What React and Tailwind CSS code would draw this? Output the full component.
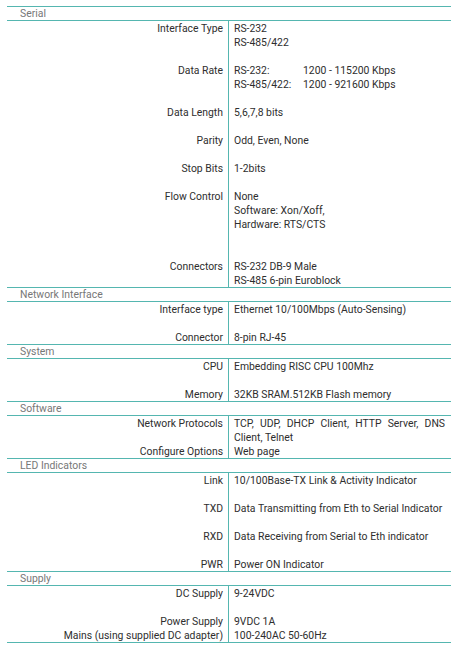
import React from "react";

const sections = [
  {
    title: "Serial",
    rows: [
      { label: "Interface Type", lines: ["RS-232", "RS-485/422"], after: 1 },
      { label: "Data Rate", rate: true, after: 1 },
      { label: "Data Length", lines: ["5,6,7,8 bits"], after: 1 },
      { label: "Parity", lines: ["Odd, Even, None"], after: 1 },
      { label: "Stop Bits", lines: ["1-2bits"], after: 1 },
      { label: "Flow Control", lines: ["None", "Software: Xon/Xoff,", "Hardware: RTS/CTS"], after: 2 },
      { label: "Connectors", lines: ["RS-232 DB-9 Male", "RS-485 6-pin Euroblock"], after: 0 },
    ],
  },
  {
    title: "Network Interface",
    rows: [
      { label: "Interface type", lines: ["Ethernet 10/100Mbps (Auto-Sensing)"], after: 1 },
      { label: "Connector", lines: ["8-pin RJ-45"], after: 0 },
    ],
  },
  {
    title: "System",
    rows: [
      { label: "CPU", lines: ["Embedding RISC CPU 100Mhz"], after: 1 },
      { label: "Memory", lines: ["32KB SRAM.512KB Flash memory"], after: 0 },
    ],
  },
  {
    title: "Software",
    rows: [
      { label: "Network Protocols", protocols: true, after: 0 },
      { label: "Configure Options", lines: ["Web page"], after: 0 },
    ],
  },
  {
    title: "LED Indicators",
    rows: [
      { label: "Link", lines: ["10/100Base-TX Link & Activity Indicator"], after: 1 },
      { label: "TXD", lines: ["Data Transmitting from Eth to Serial Indicator"], after: 1 },
      { label: "RXD", lines: ["Data Receiving from Serial to Eth indicator"], after: 1 },
      { label: "PWR", lines: ["Power ON Indicator"], after: 0 },
    ],
  },
  {
    title: "Supply",
    rows: [
      { label: "DC Supply", lines: ["9-24VDC"], after: 1 },
      { label: "Power Supply", lines: ["9VDC 1A"], after: 0 },
      { label: "Mains (using supplied DC adapter)", lines: ["100-240AC 50-60Hz"], after: 0 },
    ],
  },
];

function Value({ row }) {
  if (row.rate) {
    return (
      <div className="grid grid-cols-[69px_1fr]">
        <div>RS-232:</div>
        <div>1200 - 115200 Kbps</div>
        <div>RS-485/422:</div>
        <div>1200 - 921600 Kbps</div>
      </div>
    );
  }
  if (row.protocols) {
    return (
      <div>
        <div className="text-justify [text-align-last:justify]">TCP, UDP, DHCP Client, HTTP Server, DNS</div>
        <div>Client, Telnet</div>
      </div>
    );
  }
  return (
    <div>
      {row.lines.map((l, i) => (
        <div key={i} className="whitespace-nowrap">{l}</div>
      ))}
    </div>
  );
}

function Row({ row }) {
  const pad = row.after === 2 ? "pb-[28px]" : row.after === 1 ? "pb-[14px]" : "";
  return (
    <div className="flex">
      <div className={`w-[221px] shrink-0 text-right pr-[5px] pt-[1px] -mb-[1px] whitespace-nowrap ${pad}`}>{row.label}</div>
      <div className={`flex-1 border-l border-[#55b6b0] pl-[5px] pr-[6px] ${pad}`}>
        <div className="pt-[1px] -mb-[1px]">
          <Value row={row} />
        </div>
      </div>
    </div>
  );
}

export default function App() {
  return (
    <div className="w-[463px] h-[649px] bg-white pt-[6px]">
      <div
        className="ml-[7px] w-[444px] text-[10.4px] leading-[14px] text-[#2e2e2e] border-b border-[#55b6b0]"
        style={{ fontFamily: 'Roboto, "Liberation Sans", sans-serif' }}
      >
        {sections.map((s) => (
          <div key={s.title}>
            <div className="border-y border-[#55b6b0] h-[15px] leading-[13px] pl-[13px] text-[#777777]">
              {s.title}
            </div>
            {s.rows.map((r) => (
              <Row key={r.label} row={r} />
            ))}
          </div>
        ))}
      </div>
    </div>
  );
}
